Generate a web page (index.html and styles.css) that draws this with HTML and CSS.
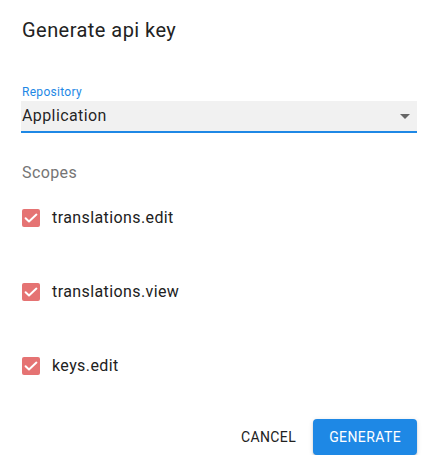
FILE: index.html
```html
<!DOCTYPE html>
<html lang="en">
<head>
<meta charset="utf-8">
<title>Generate api key</title>
<link rel="stylesheet" href="styles.css">
</head>
<body>
<div class="dialog">
  <h2 class="title">Generate api key</h2>
  <div class="field">
    <label class="field-label">Repository</label>
    <div class="select">
      <span class="select-value">Application</span>
      <span class="select-arrow"></span>
    </div>
  </div>
  <div class="scopes-label">Scopes</div>
  <ul class="scopes">
    <li class="scope">
      <span class="checkbox"><svg viewBox="0 0 18 18" width="18" height="18"><path d="M3.6 9.2 L7 12.4 L14.4 5.6" fill="none" stroke="#fff" stroke-width="2" stroke-linecap="round" stroke-linejoin="round"/></svg></span>
      <span class="scope-name">translations.edit</span>
    </li>
    <li class="scope">
      <span class="checkbox"><svg viewBox="0 0 18 18" width="18" height="18"><path d="M3.6 9.2 L7 12.4 L14.4 5.6" fill="none" stroke="#fff" stroke-width="2" stroke-linecap="round" stroke-linejoin="round"/></svg></span>
      <span class="scope-name">translations.view</span>
    </li>
    <li class="scope">
      <span class="checkbox"><svg viewBox="0 0 18 18" width="18" height="18"><path d="M3.6 9.2 L7 12.4 L14.4 5.6" fill="none" stroke="#fff" stroke-width="2" stroke-linecap="round" stroke-linejoin="round"/></svg></span>
      <span class="scope-name">keys.edit</span>
    </li>
  </ul>
  <div class="actions">
    <button class="btn btn-text">Cancel</button>
    <button class="btn btn-primary">Generate</button>
  </div>
</div>
</body>
</html>
```

FILE: styles.css
```css
* { box-sizing: border-box; }
html, body {
  margin: 0;
  padding: 0;
  background: #fff;
}
body {
  font-family: Roboto, "Noto Sans", Arial, sans-serif;
  color: rgba(0, 0, 0, 0.87);
}
.dialog {
  width: 437px;
  padding: 14px 20px 0 22px;
}
.title {
  margin: 0;
  font-size: 20px;
  line-height: 32px;
  font-weight: 400;
  letter-spacing: 0.45px;
  color: #222;
}
.field {
  margin-top: 38px;
}
.field-label {
  display: block;
  font-size: 12px;
  line-height: 16px;
  letter-spacing: 0.3px;
  color: #1e88e5;
  margin-bottom: 1px;
}
.select {
  display: flex;
  align-items: center;
  justify-content: space-between;
  height: 32px;
  margin-left: -1px;
  padding-left: 1px;
  background: #f1f1f1;
  border-bottom: 2px solid #1e88e5;
}
.select-value {
  font-size: 16px;
  line-height: 30px;
  letter-spacing: 0.4px;
  color: rgba(0, 0, 0, 0.87);
}
.select-arrow {
  width: 0;
  height: 0;
  margin-right: 7px;
  border-left: 5px solid transparent;
  border-right: 5px solid transparent;
  border-top: 5px solid #666;
}
.scopes-label {
  margin-top: 28px;
  font-size: 16px;
  line-height: 24px;
  letter-spacing: 0.4px;
  color: #757575;
}
.scopes {
  list-style: none;
  margin: 17px 0 0;
  padding: 0;
  display: flex;
  flex-direction: column;
  gap: 42px;
}
.scope {
  display: flex;
  align-items: center;
  height: 32px;
  gap: 12px;
}
.checkbox {
  display: flex;
  width: 18px;
  height: 18px;
  border-radius: 2px;
  background: #e57373;
}
.scope-name {
  font-size: 16px;
  line-height: 24px;
  letter-spacing: 0.4px;
  color: #212121;
}
.actions {
  display: flex;
  justify-content: flex-end;
  gap: 9px;
  margin-top: 37px;
}
.btn {
  font-family: Roboto, "Noto Sans", Arial, sans-serif;
  font-size: 14px;
  font-weight: 400;
  letter-spacing: 0.4px;
  text-transform: uppercase;
  height: 36px;
  line-height: 36px;
  border: 0;
  border-radius: 4px;
  cursor: pointer;
}
.btn-text {
  background: transparent;
  color: #212121;
  padding: 0 8px;
}
.btn-primary {
  background: #1e88e5;
  color: #fff;
  padding: 0 16px;
  min-width: 102px;
  box-shadow: 0 3px 1px -2px rgba(0,0,0,0.2), 0 2px 2px 0 rgba(0,0,0,0.14), 0 1px 5px 0 rgba(0,0,0,0.12);
}
```
